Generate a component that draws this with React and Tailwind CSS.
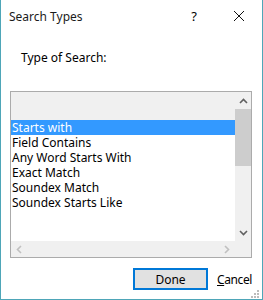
import React from "react";

const items = [
  "Starts with",
  "Field Contains",
  "Any Word Starts With",
  "Exact Match",
  "Soundex Match",
  "Soundex Starts Like",
];

export default function App() {
  return (
    <div className="w-[263px] h-[300px] bg-white border-x border-b border-[#4ea6b8] flex flex-col text-[12px] leading-[15px] text-black font-['Noto_Sans',sans-serif]">
      {/* Title bar */}
      <div className="h-[32px] flex items-center pl-[8px] shrink-0">
        <span className="text-[#1b1b1b]">Search Types</span>
        <span className="ml-auto w-[14px] text-center mr-[32px] text-[13px]">?</span>
        <svg width="12" height="12" viewBox="0 0 12 12" className="mr-[17px]">
          <path d="M1 1L11 11M11 1L1 11" stroke="#111" strokeWidth="1" />
        </svg>
      </div>

      {/* Label */}
      <div className="pl-[20px] mt-[18px]">Type of Search:</div>

      {/* Listbox */}
      <div className="ml-[9px] mt-[26px] w-[242px] h-[167px] border border-[#ababab] bg-[#f0f0f0] grid grid-cols-[224px_16px] grid-rows-[149px_16px]">
        <div className="flex flex-col">
          <div className="h-[28px] bg-[#f0f0f0]" />
          <div className="flex-1 bg-white flex flex-col">
            {items.map((t, i) => (
              <div
                key={t}
                className={`h-[15px] leading-[15px] pl-[1px] whitespace-nowrap overflow-hidden ${
                  i === 0 ? "bg-[#3399ff] text-white" : ""
                }`}
              >
                {t}
              </div>
            ))}
          </div>
        </div>
        {/* vertical scrollbar */}
        <div className="flex flex-col bg-[#f0f0f0]">
          <div className="h-[17px] flex items-center justify-center">
            <svg width="9" height="6" viewBox="0 0 9 6">
              <path d="M1 5L4.5 1.5L8 5" stroke="#606060" strokeWidth="1.6" fill="none" />
            </svg>
          </div>
          <div className="h-[57px] bg-[#cdcdcd]" />
          <div className="flex-1" />
          <div className="h-[17px] flex items-center justify-center">
            <svg width="9" height="6" viewBox="0 0 9 6">
              <path d="M1 1L4.5 4.5L8 1" stroke="#606060" strokeWidth="1.6" fill="none" />
            </svg>
          </div>
        </div>
        {/* horizontal scrollbar */}
        <div className="flex items-center justify-between bg-[#f0f0f0] px-[5px]">
          <svg width="6" height="9" viewBox="0 0 6 9">
            <path d="M5 1L1.5 4.5L5 8" stroke="#c0c0c0" strokeWidth="1.6" fill="none" />
          </svg>
          <svg width="6" height="9" viewBox="0 0 6 9">
            <path d="M1 1L4.5 4.5L1 8" stroke="#c0c0c0" strokeWidth="1.6" fill="none" />
          </svg>
        </div>
        <div className="bg-[#f0f0f0]" />
      </div>

      {/* Buttons */}
      <div className="flex items-center mt-[10px] pl-[132px]">
        <button className="w-[75px] h-[22px] border-2 border-[#0078d7] bg-[#e1e1e1] flex items-center justify-center">
          Done
        </button>
        <span className="ml-[9px] tracking-[-0.4px]">
          <span className="underline">C</span>ancel
        </span>
      </div>

      {/* grip */}
      <div className="flex justify-end mt-auto pr-[2px] pb-[2px]">
        <svg width="9" height="9" viewBox="0 0 9 9">
          <rect x="6" y="0" width="2" height="2" fill="#bcbcbc" />
          <rect x="3" y="3" width="2" height="2" fill="#bcbcbc" />
          <rect x="6" y="3" width="2" height="2" fill="#bcbcbc" />
          <rect x="0" y="6" width="2" height="2" fill="#bcbcbc" />
          <rect x="3" y="6" width="2" height="2" fill="#bcbcbc" />
          <rect x="6" y="6" width="2" height="2" fill="#bcbcbc" />
        </svg>
      </div>
    </div>
  );
}
